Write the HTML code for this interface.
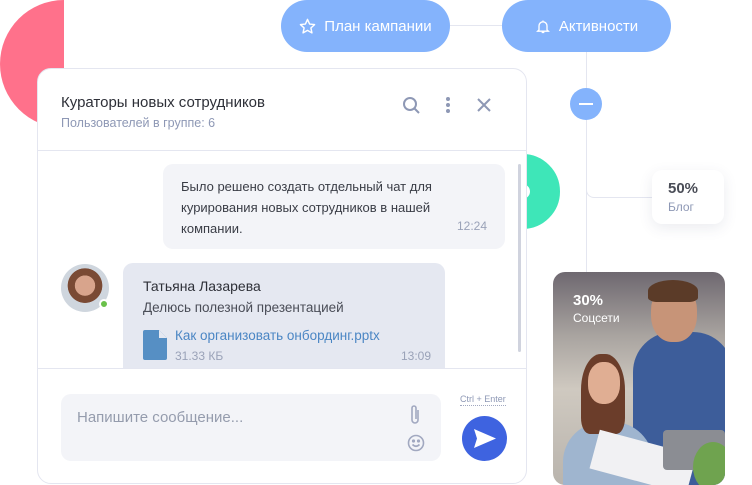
<!DOCTYPE html>
<html><head><meta charset="utf-8"><style>
*{margin:0;padding:0;box-sizing:border-box}
body{width:752px;height:485px;overflow:hidden;background:#fff;font-family:"Liberation Sans",sans-serif;position:relative}
.a{position:absolute}
.pill{background:#84b3fc;color:#fff;border-radius:26px;height:52px;top:0;display:flex;align-items:center;justify-content:center;font-size:15px;gap:8px}
</style></head><body>
<div class="a" style="left:0;top:0;width:64px;height:128px;background:#ff718b;border-radius:64px 0 0 64px"></div>
<div class="a" style="left:450px;top:25px;width:52px;height:1px;background:#e4e6f0"></div>
<div class="a" style="left:586px;top:52px;width:1px;height:222px;background:#e4e6f0"></div>
<div class="a" style="left:586px;top:180px;width:70px;height:18px;border-left:1px solid #e4e6f0;border-bottom:1px solid #e4e6f0;border-radius:0 0 0 8px"></div>
<div class="a" style="left:570px;top:88px;width:32px;height:32px;border-radius:50%;background:#84b3fc"><div class="a" style="left:9px;top:15px;width:14px;height:2px;background:#fff"></div></div>
<div class="a pill" style="left:281px;width:169px"><svg width="17" height="17" viewBox="0 0 24 24" fill="none" stroke="#fff" stroke-width="2" stroke-linejoin="round"><path d="M12 2l3 6.5 7 .8-5.2 4.8 1.5 7L12 17.5 5.7 21l1.5-7L2 9.3l7-.8z"/></svg>План кампании</div>
<div class="a pill" style="left:502px;width:169px"><svg width="16" height="17" viewBox="0 0 24 24" fill="none" stroke="#fff" stroke-width="2"><path d="M6 17V11a6 6 0 0112 0v6l2 2H4z M10 21h4 M12 3v2"/></svg>Активности</div>
<div class="a" style="left:485px;top:154px;width:75px;height:75px;border-radius:50%;border:30px solid #3ee6b8"></div>
<div class="a" style="left:652px;top:170px;width:72px;height:54px;background:#fff;border-radius:10px;box-shadow:0 4px 14px rgba(60,70,110,.1)">
<div class="a" style="left:16px;top:10px;font-size:15px;font-weight:bold;color:#4a4d57">50%</div>
<div class="a" style="left:16px;top:30px;font-size:12px;color:#8e98b5">Блог</div></div>
<div class="a" style="left:553px;top:272px;width:172px;height:213px;border-radius:12px;overflow:hidden;background:linear-gradient(180deg,#6e6870 0%,#a9a4a0 30%,#cfc9c0 55%,#b9b4ad 100%)">
<div class="a" style="left:80px;top:60px;width:100px;height:160px;background:#3d5d9a;border-radius:40px 40px 0 0"></div>
<div class="a" style="left:98px;top:12px;width:46px;height:58px;background:#c79478;border-radius:45%"></div>
<div class="a" style="left:95px;top:8px;width:50px;height:22px;background:#5b3b28;border-radius:50% 50% 20% 20%"></div>
<div class="a" style="left:10px;top:150px;width:90px;height:70px;background:#9fb5cf;border-radius:40px 40px 0 0"></div>
<div class="a" style="left:28px;top:82px;width:44px;height:80px;background:#6b3d2a;border-radius:45% 45% 20% 20%"></div>
<div class="a" style="left:35px;top:90px;width:32px;height:42px;background:#e0ae93;border-radius:45%"></div>
<div class="a" style="left:40px;top:170px;width:100px;height:40px;background:#f1f1f3;transform:rotate(15deg)"></div>
<div class="a" style="left:110px;top:158px;width:62px;height:40px;background:#8b8d93;border-radius:4px"></div>
<div class="a" style="left:140px;top:170px;width:40px;height:50px;background:#6fa34f;border-radius:50%"></div>
<div class="a" style="left:20px;top:20px;font-size:15px;font-weight:bold;color:#fff">30%</div>
<div class="a" style="left:20px;top:39px;font-size:12px;color:#fff">Соцсети</div></div>
<div class="a" style="left:37px;top:68px;width:490px;height:416px;background:#fff;border:1px solid #e4e6f0;border-radius:14px;overflow:hidden">
<div class="a" style="left:23px;top:25px;font-size:15px;color:#2e3038">Кураторы новых сотрудников</div>
<div class="a" style="left:23px;top:47px;font-size:12.5px;color:#8e98b5">Пользователей в группе: 6</div>
<svg class="a" style="left:364px;top:27px" width="18" height="18" viewBox="0 0 18 18" fill="none" stroke="#8e98b5" stroke-width="2"><circle cx="8" cy="8" r="6"/><path d="M12.5 12.5L17 17"/></svg>
<div class="a" style="left:408px;top:28px;width:4px;height:4px;border-radius:50%;background:#8e98b5;box-shadow:0 6px 0 #8e98b5,0 12px 0 #8e98b5"></div>
<svg class="a" style="left:439px;top:29px" width="14" height="14" viewBox="0 0 14 14" stroke="#8e98b5" stroke-width="2"><path d="M1 1l12 12M13 1L1 13"/></svg>
<div class="a" style="left:0;top:81px;width:490px;height:1px;background:#e4e6f0"></div>
<div class="a" style="left:0;top:82px;width:490px;height:217px;overflow:hidden">
<div class="a" style="left:125px;top:13px;width:342px;height:85px;background:#f3f4f8;border-radius:10px;font-size:13px;color:#3a3d46;line-height:21px;padding:12px 18px">Было решено создать отдельный чат для курирования новых сотрудников в нашей компании.<span class="a" style="right:18px;bottom:16px;font-size:12px;color:#9aa2b8;line-height:14px">12:24</span></div>
<div class="a" style="left:23px;top:113px;width:48px;height:48px;border-radius:50%;background:radial-gradient(circle at 50% 45%,#d8a48c 0 28%,#7a4a34 29% 48%,#cfd6de 49%)"></div>
<div class="a" style="left:61px;top:148px;width:10px;height:10px;border-radius:50%;background:#6ac14a;border:2px solid #fff"></div>
<div class="a" style="left:85px;top:112px;width:322px;height:130px;background:#e5e8f1;border-radius:10px">
<div class="a" style="left:20px;top:15px;font-size:14px;color:#2e3038">Татьяна Лазарева</div>
<div class="a" style="left:20px;top:37px;font-size:13.5px;color:#4a4d57">Делюсь полезной презентацией</div>
<svg class="a" style="left:20px;top:67px" width="24" height="30" viewBox="0 0 24 30"><path d="M2 0h14l8 8v20a2 2 0 01-2 2H2a2 2 0 01-2-2V2a2 2 0 012-2z" fill="#568fc4"/><path d="M16 0v8h8z" fill="#e5e8f1"/></svg>
<div class="a" style="left:52px;top:65px;font-size:13.5px;color:#4b86c4">Как организовать онбординг.pptx</div>
<div class="a" style="left:52px;top:86px;font-size:12px;color:#9aa2b8">31.33 КБ</div>
<div class="a" style="right:14px;top:86px;font-size:12px;color:#9aa2b8">13:09</div></div>
</div>
<div class="a" style="left:480px;top:95px;width:3px;height:188px;background:#d0d3de;border-radius:2px"></div>
<div class="a" style="left:0;top:299px;width:490px;height:1px;background:#e4e6f0"></div>
<div class="a" style="left:23px;top:325px;width:380px;height:67px;background:#f3f4f8;border-radius:10px">
<div class="a" style="left:16px;top:15px;font-size:15px;color:#959cad">Напишите сообщение...</div>
<svg class="a" style="left:348px;top:10px" width="12" height="22" viewBox="0 0 12 22" fill="none" stroke="#a1a8c0" stroke-width="1.6"><path d="M9 6v10a3 3 0 01-6 0V4a2 2 0 014 0v11"/></svg>
<svg class="a" style="left:346px;top:40px" width="18" height="18" viewBox="0 0 18 18" fill="none" stroke="#a1a8c0" stroke-width="1.6"><circle cx="9" cy="9" r="7.5"/><path d="M5.5 10.5q3.5 3.5 7 0"/><circle cx="6.5" cy="7" r=".8" fill="#a1a8c0"/><circle cx="11.5" cy="7" r=".8" fill="#a1a8c0"/></svg></div>
<div class="a" style="left:422px;top:325px;font-size:9px;color:#8e98b5;border-bottom:1px dotted #a1a8c0;padding-bottom:1px">Ctrl + Enter</div>
<div class="a" style="left:424px;top:347px;width:45px;height:45px;border-radius:50%;background:#3e63e0"><svg class="a" style="left:12px;top:13px" width="22" height="19" viewBox="0 0 22 19"><path d="M0 0l22 9.5L0 19l3-9.5z" fill="#fff"/></svg></div>
</div>
</body></html>
